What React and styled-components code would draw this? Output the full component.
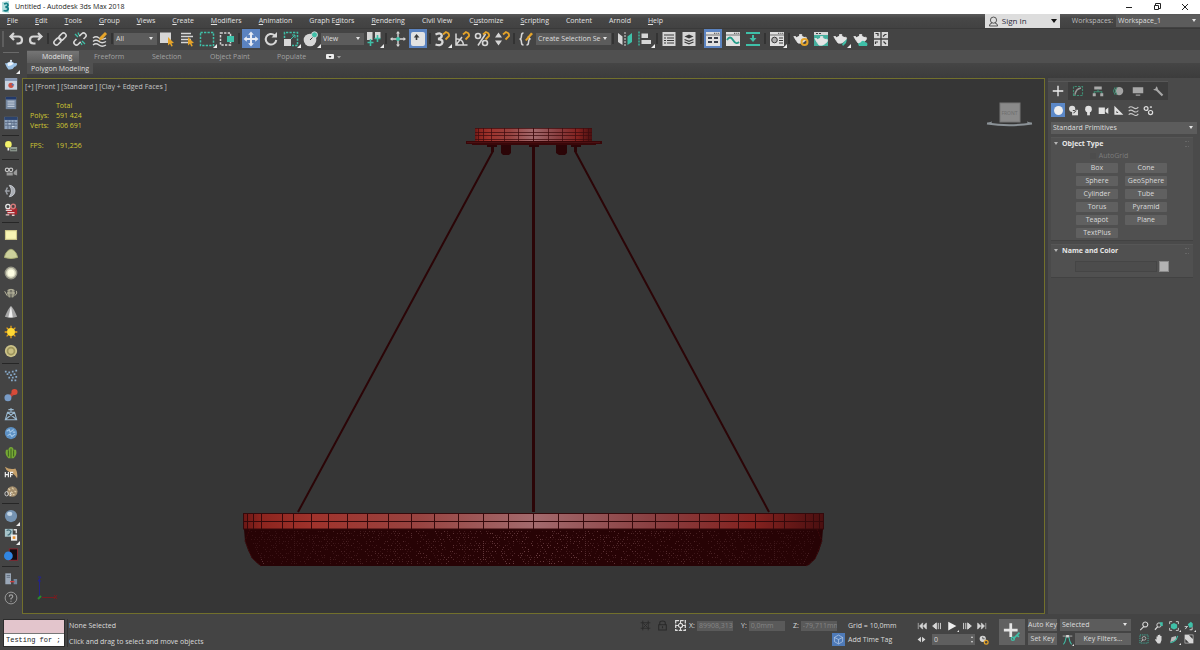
import React, { useState } from "react";
import styled, { createGlobalStyle, css } from "styled-components";

const GlobalStyle = createGlobalStyle`
    * {
        box-sizing: border-box;
    }
    body {
        margin: 0;
        background: #444444;
        color: #dcdcdc;
        font-family: "Open Sans", "Noto Sans", sans-serif;
        font-size: 7px;
        line-height: 10px;
    }
    button, input, select {
        font: inherit;
        color: inherit;
        margin: 0;
        padding: 0;
        border: none;
        border-radius: 0;
        background: none;
    }
`;

const light = "#d6d6d6";
const teal = "#3fc0a8";
const gold = "#e5a42a";

const Page = styled.div`
    display: flex;
    flex-direction: column;
    min-height: 100vh;
`;

/* ---------- title and menus ---------- */

const TitleBar = styled.header`
    display: flex;
    align-items: center;
    height: 14px;
    padding: 0 10px 0 2px;
    gap: 4px;
    background: #ffffff;
    color: #1c1c1c;
`;

const Title = styled.h1`
    flex: 1;
    margin: 0;
    font-size: 7px;
    font-weight: 400;
`;

const WindowButtons = styled.div`
    display: flex;
    gap: 18px;
`;

const WindowButton = styled.button`
    display: flex;
    width: 10px;
    height: 10px;
    color: #222222;
`;

const MenuBar = styled.nav`
    display: flex;
    align-items: center;
    height: 14px;
    padding-left: 7px;
    background: linear-gradient(#5a5a5a, #474747 30%, #424242);
`;

const MenuList = styled.div`
    display: flex;
    flex: 1;
    gap: 17px;
`;

const MenuItem = styled.button`
    white-space: nowrap;
    color: #e2e2e2;
`;

const SignIn = styled.button`
    display: flex;
    align-items: center;
    gap: 3px;
    width: 75px;
    height: 14px;
    padding: 0 3px;
    background: #dddddd;
    color: #2b2b3a;
    font-size: 8px;
`;

const SignInLabel = styled.span`
    flex: 1;
    text-align: left;
`;

const WorkspaceLabel = styled.label`
    margin-left: 12px;
    margin-right: 3px;
    color: #bdbdbd;
`;

/* ---------- shared controls ---------- */

const SelectWrap = styled.div`
    position: relative;
    width: ${(p) => p.$width || "100%"};
    height: 12px;
    flex: none;
    &::after {
        content: "";
        position: absolute;
        right: 4px;
        top: 4px;
        border: 2px solid transparent;
        border-top: 3px solid #e4e4e4;
        pointer-events: none;
    }
`;

const SelectBox = styled.select`
    appearance: none;
    display: block;
    width: 100%;
    height: 12px;
    padding: 0 9px 0 2px;
    background: #5c5c5c;
    color: #dedede;
    line-height: 12px;
`;

function Select({ id, label, value, width }) {
    return (
        <SelectWrap $width={width}>
            <SelectBox id={id} aria-label={label}>
                <option>{value}</option>
            </SelectBox>
        </SelectWrap>
    );
}

function Icon({ size = 16, children }) {
    return (
        <svg width={size} height={size} viewBox="0 0 16 16" fill="none" aria-hidden="true">
            {children}
        </svg>
    );
}

/* ---------- main toolbar ---------- */

const Toolbar = styled.div`
    display: flex;
    align-items: center;
    height: 22px;
    padding-bottom: 2px;
    background: #444444;
    border-top: 1px solid #3a3a3a;
    &::before {
        content: "";
        width: 2px;
        height: 16px;
        margin: 0 2px 0 2px;
        background: #5e5e5e;
    }
`;

const ToolButton = styled.button`
    position: relative;
    display: flex;
    flex: none;
    align-items: center;
    justify-content: center;
    width: 20px;
    height: 19px;
    ${(p) => p.$active && css`
        background: #5b83c0;
        background-clip: content-box;
        padding: 0 1px;
    `}
    ${(p) => p.$flyout && css`
        &::after {
            content: "";
            position: absolute;
            right: 0;
            bottom: 0;
            border: 2px solid #ededed;
            border-top-color: transparent;
            border-left-color: transparent;
        }
    `}
`;

const Divider = styled.span`
    flex: none;
    width: 2px;
    height: 11px;
    margin: 0 1px;
    background: #333333;
`;

const magnet = <path d="M9 3.500 L12 1 Q15.500 2 15 5 L11.500 8.500" stroke={gold} strokeWidth="1.800" />;

const teapot = (
    <path
        d="M3.500 6.500 Q7.500 3.700 11.500 6.500 Q12 9 10.700 11 Q8 13 5 12 Q3 9.500 0.800 5.500 L2.600 5.500 Z M6.500 3.500 H8.800 V5.500 H6.500 Z M11 6.500 Q14.500 5.500 13.200 8.600 Q12.500 10 10.800 10.300"
        fill="#e4e4e4"
        stroke="#e4e4e4"
        strokeWidth="0.800"
    />
);

const windowShape = (
    <>
        <path d="M1 1 H15 V15 H1 Z" fill="#e0e0e0" />
        <path d="M1 4 H15" stroke="#444" strokeWidth="0.700" />
        <path d="M9 2.300 H10.300 M11.300 2.300 H12.300 M13.200 2.300 H14.200" stroke="#444" />
    </>
);

const icons = {
    undo: <path d="M6 2 L2.500 5.500 L6 9 M2.500 5.500 H10.500 Q14 5.500 14 9 Q14 12.500 10.500 12.500 H8.500" stroke={light} strokeWidth="2.200" />,
    redo: <path d="M10 2 L13.500 5.500 L10 9 M13.500 5.500 H5.500 Q2 5.500 2 9 Q2 12.500 5.500 12.500 H7.500" stroke={light} strokeWidth="2.200" />,
    link: (
        <g transform="rotate(-45 8 8)" stroke={light} strokeWidth="1.600">
            <rect x="0.500" y="5.500" width="8" height="5" rx="2.500" />
            <rect x="7.500" y="5.500" width="8" height="5" rx="2.500" />
        </g>
    ),
    unlink: (
        <>
            <g transform="rotate(-45 8 8)" stroke={light} strokeWidth="1.600">
                <path d="M5.500 5.500 H3 Q0.500 5.500 0.500 8 Q0.500 10.500 3 10.500 H6.500" />
                <path d="M9.500 5.500 H13 Q15.500 5.500 15.500 8 Q15.500 10.500 13 10.500 H10.500" />
            </g>
            <path d="M3 3 L6 6 M6 1.500 L7 4 M10 10 L13 13 M9 12 L10 14" stroke={teal} strokeWidth="1.300" />
        </>
    ),
    bind: (
        <>
            <path d="M1 7 Q4 4.500 7 7 T14 7 M1 10.500 Q4 8 7 10.500 T14 10.500 M1 14 Q4 11.500 7 14 T14 14" stroke={light} strokeWidth="1.400" />
            <path d="M7 10 L8 6 L13 1 L15 3 L10.500 8 Z" fill={gold} />
        </>
    ),
    pick: (
        <>
            <path d="M1 1.500 H12 V12 H1 Z" fill={light} />
            <path d="M9 6 L15 12 L12.500 12.200 L13.800 15 L12.300 15.500 L11 12.800 L9 14.500 Z" fill={gold} />
        </>
    ),
    byName: (
        <>
            <path d="M2 2.500 H12 M2 5.500 H14 M2 8.500 H12 M2 11.500 H9" stroke={light} strokeWidth="1.600" />
            <path d="M9 6 L15 12 L12.500 12.200 L13.800 15 L12.300 15.500 L11 12.800 L9 14.500 Z" fill={gold} />
        </>
    ),
    region: <rect x="1.500" y="1.500" width="13" height="13" stroke={teal} strokeWidth="1.500" strokeDasharray="2.300 1.200" />,
    crossing: (
        <>
            <rect x="1.500" y="2" width="10" height="12" stroke={light} strokeWidth="1.500" strokeDasharray="2.300 1.300" />
            <rect x="8" y="5" width="7" height="6" fill={teal} />
        </>
    ),
    move: <path d="M8 0.500 L10.800 3.800 H9 V7 H12.200 V5.200 L15.500 8 L12.200 10.800 V9 H9 V12.200 H10.800 L8 15.500 L5.200 12.200 H7 V9 H3.800 V10.800 L0.500 8 L3.800 5.200 V7 H7 V3.800 H5.200 Z" fill="#e8ecf4" />,
    rotate: (
        <>
            <path d="M11.500 4.200 A5.300 5.300 0 1 0 13.300 9" stroke={light} strokeWidth="2" />
            <path d="M14 1 V6.500 H8.500 Z" fill={light} />
        </>
    ),
    scale: (
        <>
            <path d="M1.500 7 V1.500 H14.500 V14.500 H9" stroke={teal} strokeWidth="1.500" strokeDasharray="2.300 1.200" />
            <rect x="1" y="8" width="7" height="7" fill={light} />
            <path d="M8 8 L12 4 M9 4 H12 V7" stroke={teal} />
        </>
    ),
    place: (
        <>
            <circle cx="7" cy="9" r="6.300" fill={light} />
            <path d="M7 9 L12 4" stroke="#333" />
            <circle cx="11.500" cy="3.800" r="3" fill={teal} stroke={light} />
        </>
    ),
    pivot: (
        <>
            <path d="M1 1 H6.500 V9 H1 Z M9 1 H14.500 V7 H9 Z" fill={light} />
            <path d="M4.500 8 V15 M1.500 11.500 H7.500 M11.500 4 V11 M8.500 7.500 H14.500" stroke={teal} strokeWidth="1.600" />
        </>
    ),
    manipulate: (
        <>
            <path d="M8 1 V15 M1 8 H15" stroke={light} strokeWidth="1.400" />
            <path d="M8 0 L10 2.500 H6 Z M8 16 L10 13.500 H6 Z M0 8 L2.500 6 V10 Z M16 8 L13.500 6 V10 Z" fill={light} />
            <circle cx="8" cy="8" r="2" fill={teal} />
        </>
    ),
    keyboard: (
        <>
            <rect x="1" y="1" width="14" height="14" rx="2" fill="#e2e2e2" />
            <path d="M6.500 3 L9.500 6.500 H7.300 V9 H5.700 V6.500 H3.800 Z" fill="#3c3c3c" />
        </>
    ),
    snap3: (
        <>
            <path d="M1.500 3.500 Q7.500 1 7.800 4.600 Q7.800 7.500 4 8 Q8.800 8.300 8.500 11.500 Q7.500 15.500 1.500 13.500" stroke={light} strokeWidth="2.300" />
            {magnet}
        </>
    ),
    snapAngle: (
        <>
            <path d="M2 2.500 V14 H13.500 M2 8 Q9 7.500 9.500 14 M2 14 L8 6" stroke={light} strokeWidth="1.500" />
            {magnet}
        </>
    ),
    snapPercent: (
        <>
            <circle cx="4" cy="5" r="2.500" stroke={light} strokeWidth="1.600" />
            <circle cx="11" cy="12" r="2.500" stroke={light} strokeWidth="1.600" />
            <path d="M11.500 3 L4 14.500" stroke={light} strokeWidth="1.600" />
            {magnet}
        </>
    ),
    snapSpinner: (
        <>
            <path d="M4.500 1.500 L8 6.500 H1 Z M4.500 14.500 L8 9.500 H1 Z" fill={light} />
            {magnet}
        </>
    ),
    braces: (
        <>
            <path d="M5.500 2 Q3.500 2 3.500 4.500 Q3.500 8 1.500 8 Q3.500 8 3.500 11.500 Q3.500 14 5.500 14 M8.500 14 Q10.500 14 10.500 11.500 Q10.500 8 12.500 8 Q10.500 7.500 10.500 5" stroke={light} strokeWidth="1.500" />
            <path d="M7 9 L13 1.500 L15 3 L8.500 10 Z" fill={gold} />
        </>
    ),
    mirror: (
        <>
            <path d="M1 2 L5.500 5.500 V14 L1 11 Z" fill={light} />
            <path d="M15 2 L10.500 5.500 V14 L15 11 Z" fill={teal} />
            <path d="M8 1 V16" stroke={light} strokeDasharray="2 1" />
        </>
    ),
    align: (
        <>
            <path d="M2 0.500 V15.500" stroke={teal} strokeWidth="1.300" strokeDasharray="2 1" />
            <path d="M4.500 2.500 H11 V7 H4.500 Z M4.500 9 H14 V13 H4.500 Z" fill={light} />
        </>
    ),
    sceneList: (
        <>
            <path d="M1.500 1 H14.500 V15 H1.500 Z" fill={light} />
            <path d="M3 4 H13 M3 7 H5 M6 7 H13 M3 9.500 H5 M6 9.500 H13 M3 12 H5 M6 12 H13" stroke="#3a3a3a" strokeWidth="1.100" />
        </>
    ),
    layers: (
        <>
            <path d="M1.500 1 H14.500 V15 H1.500 Z" fill={light} />
            <path d="M8 3.500 L12.500 5.500 L8 7.500 L3.500 5.500 Z" fill="#3a3a3a" />
            <path d="M3.500 8.500 L8 10.300 L12.500 8.500 M3.500 11 L8 12.800 L12.500 11" stroke="#3a3a3a" strokeWidth="1.300" />
        </>
    ),
    ribbon: (
        <>
            {windowShape}
            <path d="M3 7 H7 M9 7 H13 M3 11 H7 M9 11 H13" stroke="#3a3f49" strokeWidth="1.800" />
        </>
    ),
    curve: (
        <>
            {windowShape}
            <path d="M2 9 Q5 4 8 9 T14 11" stroke="#249b88" strokeWidth="1.800" />
        </>
    ),
    schematic: (
        <>
            <path d="M1 2 H15 M1 14 H15" stroke={teal} strokeWidth="2.200" />
            <path d="M8 4 V8" stroke={teal} strokeWidth="2" />
            <path d="M4.500 7 H11.500 L8 11 Z" fill={teal} />
        </>
    ),
    material: (
        <>
            {windowShape}
            <circle cx="5.500" cy="9" r="2.800" fill="#aaa" stroke="#3a3a3a" />
            <path d="M10 7 H14 M10 9.500 H14 M10 12 H14" stroke="#3a3a3a" />
        </>
    ),
    renderSetup: (
        <>
            {teapot}
            <circle cx="11.500" cy="11" r="3" stroke={gold} strokeWidth="2" />
        </>
    ),
    renderFrame: (
        <>
            <rect x="1" y="1" width="14" height="14" fill="#45b09e" />
            <path d="M1 1 H15 V4 H1 Z" fill={light} />
            <path d="M3 2.500 H5 M6 2.500 H8" stroke="#444" />
            <g transform="translate(1 2)">{teapot}</g>
        </>
    ),
    render: (
        <>
            {teapot}
            <path d="M9 13 L14 8 L13 12 L10 15 Z" fill={teal} />
        </>
    ),
    cloud: (
        <>
            {teapot}
            <path d="M6 15 Q4 12 7.500 11.500 Q9.500 8.500 12 11 Q15.500 11.500 14 15 Z" fill={teal} />
        </>
    ),
    gallery: (
        <>
            <path d="M1 1 H7.300 V7.300 H1 Z M8.700 1 H15 V7.300 H8.700 Z M1 8.700 H7.300 V15 H1 Z M8.700 8.700 H15 V15 H8.700 Z" fill={light} />
            <path d="M2.500 2.500 H5 V5 M10 5.500 L12 3.500 H13.500 M2.500 13 V11 H5 M10.500 10.500 L13 13" stroke="#3c3c3c" strokeWidth="1.200" />
        </>
    ),
};

const toolGroups = [
    [["Undo", "undo"], ["Redo", "redo"]],
    [["Link", "link"], ["Unlink", "unlink"], ["Bind to space warp", "bind"]],
    [
        { select: "Selection filter", value: "All", width: "43px" },
        ["Select object", "pick"], ["Select by name", "byName"],
        ["Rectangular region", "region", "fly"], ["Window crossing", "crossing"],
    ],
    [
        ["Move", "move", "on"], ["Rotate", "rotate"], ["Scale", "scale", "fly"], ["Place", "place", "fly"],
        { select: "Reference coordinates", value: "View", width: "43px" },
        ["Pivot center", "pivot", "fly"],
    ],
    [["Manipulate", "manipulate"], ["Keyboard override", "keyboard", "on"]],
    [["Snaps", "snap3", "fly"], ["Angle snap", "snapAngle"], ["Percent snap", "snapPercent"], ["Spinner snap", "snapSpinner"]],
    [
        ["Edit selection sets", "braces"],
        { select: "Named selection sets", value: "Create Selection Se", width: "75px" },
    ],
    [["Mirror", "mirror"], ["Align", "align", "fly"]],
    [["Scene explorer", "sceneList"], ["Layer explorer", "layers"]],
    [["Toggle ribbon", "ribbon", "on"], ["Curve editor", "curve"], ["Schematic view", "schematic"]],
    [["Material editor", "material", "fly"]],
    [
        ["Render setup", "renderSetup"], ["Rendered frame", "renderFrame"], ["Render", "render", "fly"],
        ["Render in cloud", "cloud"], ["Gallery", "gallery"],
    ],
];

function MainToolbar() {
    return (
        <Toolbar>
            {toolGroups.map((group, g) => (
                <React.Fragment key={g}>
                    {g > 0 && <Divider />}
                    {group.map((tool) =>
                        tool.select ? (
                            <Select key={tool.select} label={tool.select} value={tool.value} width={tool.width} />
                        ) : (
                            <ToolButton
                                key={tool[0]}
                                aria-label={tool[0]}
                                $active={tool[2] === "on"}
                                $flyout={tool[2] === "fly"}
                            >
                                <Icon>{icons[tool[1]]}</Icon>
                            </ToolButton>
                        )
                    )}
                </React.Fragment>
            ))}
        </Toolbar>
    );
}

/* ---------- left toolbar ---------- */

const Body = styled.div`
    display: flex;
    flex: 1;
`;

const SideBar = styled.aside`
    display: flex;
    flex-direction: column;
    width: 22px;
    padding: 2px 2px 6px 1px;
    background: #444444;
    &::before {
        content: "";
        height: 1px;
        margin: 0 1px 2px 2px;
        background: #6a6a6a;
    }
`;

const SideButton = styled(ToolButton)`
    flex: 1;
    width: auto;
    height: auto;
    min-height: 14px;
`;

const SideDivider = styled.span`
    height: 1px;
    margin: 2px 1px;
    background: #262626;
`;

const sideGroups = [
    [
        <>
            <path d="M3 6 Q8 2 12 6 Q15 5 15 7 Q14 10 12 10 Q10 14 5 13 Q3 11 1 6 Z" fill="#9ec3e6" />
            <path d="M4 6 Q8 3.500 11 6.500 Q8 9 4.500 9 Z" fill="#eef5fb" />
            <circle cx="8" cy="3.300" r="1.200" fill="#dde9f4" />
        </>,
        <>
            <rect x="1" y="1.500" width="14" height="13" fill="#c9d3e2" />
            <path d="M1 1.500 H15 V4.500 H1 Z" fill="#8497b5" />
            <circle cx="8" cy="9.500" r="3" fill="#cb5145" />
            <path d="M9 7 L12 9 L9 10 Z" fill="#4a78ba" />
        </>,
        <>
            <rect x="2" y="1" width="12" height="14" fill="#7688a0" />
            <path d="M2 1 H14 V4 H2 Z" fill="#22396a" />
            <path d="M4 6 H12 M4 8 H12 M4 10 H12 M4 12 H12" stroke="#c6cfdb" />
        </>,
        <>
            <rect x="0.500" y="1" width="15" height="14" fill="#8fa2ba" />
            <path d="M0.500 1 H15.500 V4.500 H0.500 Z" fill="#2b436e" />
            <path d="M1 7.500 H15 M1 10.500 H15 M4.500 5 V15 M8 5 V15 M11.500 5 V15" stroke="#5a6c86" />
            <path d="M5 9 H8 M9 12 H12" stroke="#dfe8f0" />
        </>,
    ],
    [
        <>
            <circle cx="5" cy="5" r="3.800" fill="#f3f26a" />
            <path d="M4 9 H6 V12 H4 Z" fill="#e8e8e8" />
            <path d="M7 8 H15 V13 H7 Z" fill="#8f9a90" />
            <path d="M8 11 H14" stroke="#4e5850" />
        </>,
    ],
    [
        <>
            <circle cx="3.500" cy="5.500" r="2" stroke="#c4c4c4" strokeWidth="1.300" />
            <circle cx="8" cy="5.500" r="2" stroke="#c4c4c4" strokeWidth="1.300" />
            <path d="M3 8.500 H10 V12 H3 Z M11 8 L15 4.500 V12 L11 10.500 Z" fill="#9a9a9a" />
        </>,
        <>
            <path d="M6 1.500 A6.500 6.500 0 0 1 6 14.500 Q11 8 6 1.500 Z" fill="#a9adb3" stroke="#c8ccd2" />
            <path d="M4 4 Q1 8 4 12 M6.500 8 H1" stroke="#9b9fa6" strokeWidth="1.600" />
        </>,
        <>
            <path d="M3 6 H15 V13 H4 Z" fill="#a8242c" />
            <circle cx="4.500" cy="4" r="2.500" stroke="#e6e6e6" strokeWidth="1.500" />
            <circle cx="10.500" cy="4" r="2.500" stroke="#d67a7a" strokeWidth="1.700" />
            <path d="M2 8.500 H9 M4 11 H12 M2 13.500 H6 M9 14 H12" stroke="#e4cccc" strokeWidth="1.500" />
        </>,
    ],
    [
        <rect x="1.700" y="3" width="12.600" height="10" fill="#f8f5b4" stroke="#cfc98b" strokeWidth="1.300" />,
        <path d="M0.500 12 Q2 4 8 2.500 Q14 4 15.500 12 Q8 14.500 0.500 12 Z" fill="#ccd09c" stroke="#abb076" />,
        <>
            <circle cx="8" cy="8" r="6.500" fill="#d8d8c0" stroke="#969686" strokeWidth="1.600" />
            <circle cx="8" cy="8" r="4" fill="#fdfde2" />
        </>,
        <>
            <ellipse cx="8" cy="8.500" rx="4.800" ry="4.500" fill="#77766a" />
            <path d="M4 5 Q8 2.500 12 5 M6 4 Q5 8 6 13 M10 4 Q11 8 10 13 M3.500 8 H12.500 M3.500 11 L0.800 6 M12.500 11 Q16 8 14 5.500" stroke="#c2c0a6" />
        </>,
        <>
            <path d="M8 1 Q11.500 4 15 13.500 Q8 16 1 13.500 Q4.500 4 8 1 Z" fill="#a6a6a6" />
            <path d="M8 1 L10 14 H5 Z" fill="#efefef" />
        </>,
        <>
            <path d="M8 0.800 V15.200 M0.800 8 H15.200 M3 3 L13 13 M13 3 L3 13" stroke="#eca518" strokeWidth="1.500" />
            <circle cx="8" cy="8" r="4.500" fill="#ffd934" />
        </>,
        <>
            <circle cx="8" cy="8" r="7" fill="#cdc389" />
            <circle cx="8" cy="8" r="5" fill="#9c945c" />
            <circle cx="8" cy="8" r="3" fill="#c9be82" />
        </>,
    ],
    [
        <path d="M1 4 H3 M5 5 H7 M9 4 H11 M13 3 H15 M3 7 H5 M7 8 H9 M11 7 H13 M5 11 H7 M9 11 H11 M13 10 H15 M8 14 H10 M12 14 H14" stroke="#87a9c9" strokeWidth="2" />,
        <>
            <path d="M5 11 L12 5" stroke="#bd4437" strokeWidth="3.500" />
            <circle cx="12" cy="4.500" r="3.500" fill="#d84b39" />
            <circle cx="4.500" cy="11" r="4" fill="#789bc6" />
        </>,
        <path d="M1.500 14.500 L4 6 H12 L14.500 14.500 Z M4 6 L14 14 M12 6 L2 14 M5 3 H11 M8 1 V6" stroke="#9ab8cf" strokeWidth="1.200" />,
        <>
            <circle cx="8" cy="8" r="7" fill="#5d91c4" />
            <path d="M3 6 L6 4 L7 7 L11 4 M4 11 L7 9 L9 12 L13 9 M10 7 L13 7" stroke="#a5c8e6" strokeWidth="1.200" />
        </>,
        <>
            <path d="M5 14 Q1 10 2 5 Q3.500 3 5 5 Q5 1 8 1 Q11 1 11 5 Q12.500 3 14 5 Q15 10 11 14 Z" fill="#75a834" />
            <path d="M5 5 V12 M8 3 V14 M11 5 V12" stroke="#36551e" />
        </>,
        <>
            <path d="M1 2 Q7 6 13 4 Q16 9 15 15 Q11 9 6 8 Q2 6 1 2 Z" fill="#c6a06a" />
            <path d="M1.500 8 V14 M5 8 V14 M1.500 11 H5 M7.500 14 V8.500 H10.500 M7.500 11 H10" stroke="#f1f1f1" strokeWidth="1.300" />
        </>,
        <>
            <circle cx="9.500" cy="7.500" r="6" fill="#a38d6c" />
            <path d="M5 4 L7 6 M9 3 L11 5 M8 8 L10 9 M12 7 L14 8 M10 11 H12" stroke="#ddcba6" strokeWidth="1.400" />
            <ellipse cx="3" cy="10" rx="2" ry="2.500" stroke="#d9d9d9" />
            <path d="M8.500 8 Q6 9 8 10.500 Q9 12 6.500 12.500" stroke="#ededed" />
        </>,
    ],
    [
        <>
            <circle cx="8" cy="8" r="7" fill="#7593b2" />
            <ellipse cx="6.500" cy="5.500" rx="3" ry="2.500" fill="#c4d6e6" />
        </>,
        <>
            <path d="M1 1 H10 V10 H1 Z" fill="#a7c4ca" />
            <path d="M3 3 Q6 1 8 4 Q7 8 4 8" stroke="#426b78" strokeWidth="1.300" />
            <rect x="8" y="7.500" width="7" height="7" fill="#ececec" />
            <rect x="10" y="9.500" width="3" height="3" fill="#e89132" />
            <path d="M11 2 H14 V6" stroke="#e7e7e7" strokeWidth="1.500" />
        </>,
        <>
            <rect x="6" y="1" width="9.500" height="13" fill="#130c10" stroke="#8e2730" />
            <circle cx="5" cy="9" r="5" fill="#3186e2" />
        </>,
    ],
    [
        <>
            <path d="M1.500 1.500 H8 V14 H1.500 Z" fill="#9ba8b8" />
            <path d="M3 4 H7 M3 6 H7" stroke="#5f6c7b" />
            <path d="M11 8 H15 V14 H11 Z" fill="#73869c" />
            <path d="M7 11 H12" stroke="#cb3f3f" strokeWidth="1.500" />
        </>,
        <>
            <circle cx="8" cy="8" r="6.700" stroke="#a3a3a3" />
            <path d="M6 6.500 Q6 4.500 8 4.500 Q10 4.500 10 6.300 Q10 7.500 8 8.500 V9.800 M8 11 V12.200" stroke="#a3a3a3" strokeWidth="1.300" />
        </>,
    ],
];

const sideFlyouts = ["0-0", "5-0", "5-1"];

function LeftToolbar() {
    return (
        <SideBar>
            {sideGroups.map((group, g) => (
                <React.Fragment key={g}>
                    {g > 0 && <SideDivider />}
                    {group.map((shape, i) => (
                        <SideButton key={i} aria-label={`Tool ${g + 1}.${i + 1}`} $flyout={sideFlyouts.includes(`${g}-${i}`)}>
                            <Icon size={14}>{shape}</Icon>
                        </SideButton>
                    ))}
                </React.Fragment>
            ))}
        </SideBar>
    );
}

/* ---------- ribbon ---------- */

const Main = styled.main`
    display: flex;
    flex: 1;
    flex-direction: column;
    min-width: 0;
`;

const Ribbon = styled.div`
    margin-left: 5px;
    background: #414141;
`;

const RibbonTabs = styled.div`
    display: flex;
    align-items: center;
    height: 13px;
    background: #505050;
`;

const RibbonTab = styled.button`
    height: 12px;
    width: ${(p) => p.$width};
    padding-left: 15px;
    text-align: left;
    white-space: nowrap;
    color: ${(p) => (p.$active ? "#e2e2e2" : "#a2a2a2")};
    background: ${(p) => (p.$active ? "linear-gradient(#757575, #5c5c5c)" : "none")};
`;

const RibbonToggle = styled.button`
    display: flex;
    align-items: center;
    gap: 3px;
    height: 12px;
`;

const RibbonPanel = styled.div`
    height: 15px;
    background: linear-gradient(#454545, #3c3c3c);
`;

const PanelName = styled.button`
    height: 11px;
    padding: 0 4px;
    background: #505050;
    color: #dedede;
`;

const tabs = [["Modeling", "52px"], ["Freeform", "58px"], ["Selection", "58px"], ["Object Paint", "67px"], ["Populate", "64px"]];

function RibbonBar() {
    const [tab, setTab] = useState("Modeling");
    return (
        <Ribbon>
            <RibbonTabs>
                {tabs.map(([name, width]) => (
                    <RibbonTab key={name} $width={width} $active={name === tab} onClick={() => setTab(name)}>
                        {name}
                    </RibbonTab>
                ))}
                <RibbonToggle aria-label="Minimize ribbon">
                    <svg width="16" height="6" viewBox="0 0 16 6" aria-hidden="true">
                        <rect width="8" height="5" rx="1" fill="#ededed" />
                        <path d="M2.500 2 H5.500 L4 4 Z" fill="#333" />
                        <path d="M11 2 H15 L13 4.500 Z" fill="#a0a0a0" />
                    </svg>
                </RibbonToggle>
            </RibbonTabs>
            <RibbonPanel>
                <PanelName>Polygon Modeling</PanelName>
            </RibbonPanel>
        </Ribbon>
    );
}

/* ---------- viewport ---------- */

const Workspace = styled.div`
    display: flex;
    flex: 1;
`;

const Viewport = styled.section`
    position: relative;
    flex: 1;
    border: 1px solid #72702c;
    background: #363636;
`;

const Scene = styled.svg`
    position: absolute;
    inset: 0;
    width: 100%;
    height: 100%;
`;

const ViewLabel = styled.div`
    position: absolute;
    top: 3px;
    left: 2px;
    color: #c6c6c6;
`;

const Stats = styled.table`
    position: absolute;
    top: 22px;
    left: 7px;
    border-collapse: collapse;
    color: #d2c832;
    td, th {
        height: 10px;
        padding: 0;
        font-weight: 400;
        text-align: left;
        white-space: nowrap;
    }
    th {
        width: 26px;
    }
`;

const centre = 533;
const ringOffsets = [0, 25, 50, 75, 99, 122, 145, 166, 186, 205, 222, 240, 251, 272, 280, 286];
const rimOffsets = [0, 15, 29, 42, 50, 55];

const both = (offsets) => offsets.flatMap((d) => [centre - d, centre + d]);

// crystals hanging below the ring, brighter towards the middle
const crystals = [];
for (let row = 0; row < 17; row++) {
    for (let i = 0; i < 188; i++) {
        const seed = (i * i * 31 + i * 73 + row * 151 + i * row * 17) % 97;
        if (seed < 50) {
            const x = 251 + i * 3 + (row % 2) + (seed % 2);
            crystals.push({
                x: Math.min(Math.max(x, 247 + row), 819 - row),
                y: 531 + row * 2,
                o: 0.12 + (1 - Math.abs(x - centre) / 290) * 0.4 * ((seed % 5) / 4),
            });
        }
    }
}

function Chandelier() {
    return (
        <Scene viewBox="23 79 1021 534" role="img" aria-label="Front view of a chandelier">
            <defs>
                <linearGradient id="ring">
                    <stop offset="0" stopColor="#6a1715" />
                    <stop offset="0.03" stopColor="#8c241e" />
                    <stop offset="0.12" stopColor="#a0332c" />
                    <stop offset="0.3" stopColor="#984340" />
                    <stop offset="0.5" stopColor="#a36a6d" />
                    <stop offset="0.7" stopColor="#8a4042" />
                    <stop offset="0.88" stopColor="#84221f" />
                    <stop offset="1" stopColor="#4a0f10" />
                </linearGradient>
            </defs>
            <g stroke="#2b0507" strokeWidth="2">
                <path d="M493 151 L298 512 M575 151 L769 512" />
                <path d="M533.500 146 V512" strokeWidth="3" />
            </g>
            <rect x="475" y="128" width="117" height="14" fill="url(#ring)" />
            <path d="M475 128.500 H592 M475 132.500 H592 M475 135.500 H592 M475 139.500 H592" stroke="#3f0c0e" opacity="0.75" />
            {both(rimOffsets).map((x, i) => (
                <path key={i} d={`M${x}.5 128 V142`} stroke="#3f0c0e" opacity="0.75" />
            ))}
            <path d="M466 141 H602 V144 H596 V145 H472 V144 H466 Z" fill="#390709" />
            <path d="M467 142.500 H600" stroke="#4c1012" />
            <path d="M487 145 H497 V147 H494 V152 H491 V147 H487 Z M501 145 H511 V153 L509 155 H503 L501 153 Z M529 145 H539 V147 H529 Z M556 145 H567 V153 L565 155 H559 L556 153 Z M571 145 H581 V147 H577 V152 H574 V147 H571 Z" fill="#2b0507" />
            <path d="M244 529 H823 L822 541 L819 551 L815 559 L809 565 L806 566 H261 L257 563 L252 558 L248 550 L245 541 Z" fill="#270305" />
            {crystals.map((c, i) => (
                <rect key={i} x={c.x} y={c.y} width="1" height="1" fill="#ab777c" opacity={c.o} />
            ))}
            <path d="M250 529 L245 541 L252 558 L261 566 M817 529 L822 541 L815 559 L806 566" stroke="#3c0a0c" fill="none" strokeDasharray="2 1" />
            <rect x="243" y="513" width="581" height="16" fill="url(#ring)" />
            <path d="M243 513.500 H824 M243 521.500 H824 M243 529 H824" stroke="#35090b" />
            <path d="M243.500 513 V529 M823.500 513 V529" stroke="#35090b" />
            {both(ringOffsets).map((x, i) => (
                <path key={i} d={`M${x}.5 513 V529`} stroke="#35090b" />
            ))}
            <path d="M987 123.500 Q1009 127 1032 123.500" fill="none" stroke="#8b9297" strokeWidth="2" />
            <path d="M987 123.500 L992 122 M1032 123.500 L1027 122" stroke="#8b9297" />
            <rect x="1000" y="103" width="20" height="19" fill="#8a8a8a" stroke="#777" />
            <text x="1009.500" y="115" textAnchor="middle" fontSize="5" fill="#6c6c6c">FRONT</text>
            <path d="M39.500 579 V597" stroke="#252585" />
            <path d="M42 597.500 H56" stroke="#791c20" />
            <path d="M38 599 L41 596" stroke="#2c8c2d" strokeWidth="2" />
            <path d="M38 577 H41 L38 581 H41" stroke="#252585" fill="none" />
            <path d="M54 595 L57 599 M57 595 L54 599" stroke="#791c20" />
        </Scene>
    );
}

/* ---------- command panel ---------- */

const CommandPanel = styled.aside`
    width: 155px;
    padding: 1px 3px 0 3px;
    background: #4a4a4a;
    border-left: 3px solid #3f3f3f;
`;

const PanelTabs = styled.div`
    display: flex;
    width: 120px;
    margin-left: -3px;
    margin-top: 2px;
    border-top: 1px solid #575757;
    background: #3d3d3d;
`;

const PanelTab = styled.button`
    display: flex;
    flex: 1;
    align-items: center;
    justify-content: center;
    height: 18px;
    background: ${(p) => (p.$active ? "#4a4a4a" : "none")};
`;

const Categories = styled.div`
    display: flex;
    gap: 1px;
    margin: 3px 0 5px;
`;

const Category = styled.button`
    display: flex;
    align-items: center;
    justify-content: center;
    width: 14px;
    height: 14px;
    background: ${(p) => (p.$active ? "#5b88c8" : "none")};
`;

const Rollout = styled.section`
    width: 142px;
    margin-top: 3px;
    padding-bottom: 2px;
    background: #505050;
    border-top: 1px solid #565656;
    border-bottom: 1px solid #424242;
`;

const RolloutTitle = styled.button`
    display: flex;
    align-items: center;
    gap: 4px;
    width: 100%;
    height: 11px;
    padding: 0 4px 0 3px;
    font-weight: 700;
    color: #e6e6e6;
    &::before {
        content: "";
        border: 2px solid transparent;
        border-top: 3px solid #b4b4b4;
        border-bottom: 0;
    }
    &::after {
        content: "";
        width: 4px;
        height: 4px;
        margin-left: auto;
        border: 1px dotted #666666;
        border-width: 1px 0;
    }
`;

const AutoGrid = styled.label`
    display: flex;
    align-items: center;
    justify-content: center;
    gap: 3px;
    height: 14px;
    margin-right: 26px;
    color: #7c7c7c;
    input {
        appearance: none;
        width: 6px;
        height: 6px;
        background: #4d4d4d;
    }
`;

const ObjectGrid = styled.div`
    display: grid;
    grid-template-columns: 42px 42px;
    gap: 3px 7px;
    margin-left: 25px;
`;

const ObjectButton = styled.button`
    height: 10px;
    line-height: 10px;
    background: #606060;
    border-radius: 1px;
    color: #dadada;
`;

const NameRow = styled.div`
    display: flex;
    align-items: center;
    gap: 2px;
    height: 18px;
    margin: 1px 0 0 24px;
`;

const NameInput = styled.input`
    width: 82px;
    height: 11px;
    border: 1px solid #454545;
    background: #4c4c4c;
`;

const Swatch = styled.button`
    width: 10px;
    height: 11px;
    background: #b2b2b2;
    border: 1px solid #8a8a8a;
`;

const panelTabs = [
    ["Create", <path d="M8 1 V15 M1 8 H15" stroke="#eee" strokeWidth="1.800" />],
    ["Modify", <><path d="M2 14 V2 H14 V14 Z" stroke="#3e8d73" strokeWidth="1.500" strokeDasharray="3 1.500" /><path d="M4 13 Q5 5 12 4" stroke="#989898" strokeWidth="2" /></>],
    ["Hierarchy", <><path d="M3 2 H13 V6 H3 Z" fill="#aaa" /><path d="M8 6 V9 M3 14 V9 H13 V14" stroke="#3e8d73" strokeWidth="1.500" /><path d="M1 11 H5 V15 H1 Z M11 11 H15 V15 H11 Z" fill="#aaa" /></>],
    ["Motion", <><circle cx="9.500" cy="8" r="5.500" fill="#a3a3a3" /><path d="M4 3 Q0 8 4 13 M6.500 3 Q2.500 8 6.500 13" stroke="#3e8d73" strokeWidth="1.300" /></>],
    ["Display", <><path d="M1 3 H15 V11 H1 Z" fill="#a8a8a8" /><path d="M5 13.500 H11" stroke="#a8a8a8" strokeWidth="1.500" /></>],
    ["Utilities", <><path d="M6 6 L14 14" stroke="#a8a8a8" strokeWidth="2.800" /><path d="M6 1.500 Q8.500 3.500 7.500 6.500 Q4.500 8.500 1.500 6 L4.500 5 L5 3.500 Z" fill="#a8a8a8" /></>],
];

const categories = [
    ["Geometry", <circle cx="8" cy="8" r="6.500" fill="#efefef" />],
    ["Shapes", <><circle cx="6" cy="5.500" r="4.500" fill="#ddd" /><path d="M6 7 H14.500 V15 H6 Z" fill="#ddd" /><path d="M7 8 H10 M8 12 L12 8" stroke="#444" strokeWidth="1.500" /></>],
    ["Lights", <><circle cx="8" cy="6" r="4.800" fill="#e2e2e2" /><path d="M6 10 H10 V15 H6 Z" fill="#e2e2e2" /></>],
    ["Cameras", <path d="M1 3.500 H10 V13 H1 Z M11 7 L15 3.500 V13 L11 10 Z" fill="#e2e2e2" />],
    ["Helpers", <path d="M2 1 L15 14 H2 Z M5 8.500 V11.500 H8 Z" fill="#e2e2e2" fillRule="evenodd" />],
    ["Space warps", <path d="M1 4 Q4 1 8 4 T15 3 M1 9 Q4 6 8 9 T15 8 M1 14 Q4 11 8 14 T15 13" stroke="#c8c8c8" strokeWidth="1.600" />],
    ["Systems", <><circle cx="4.500" cy="5" r="2.800" stroke="#ddd" strokeWidth="1.800" /><circle cx="11" cy="11" r="3" stroke="#ddd" strokeWidth="1.800" /><path d="M10 3 H13" stroke="#ddd" strokeWidth="2" /></>],
];

const objectTypes = [
    "Box", "Cone", "Sphere", "GeoSphere", "Cylinder", "Tube",
    "Torus", "Pyramid", "Teapot", "Plane", "TextPlus",
];

function CreatePanel() {
    return (
        <CommandPanel>
            <PanelTabs>
                {panelTabs.map(([name, shape], i) => (
                    <PanelTab key={name} aria-label={name} $active={i === 0}>
                        <Icon size={12}>{shape}</Icon>
                    </PanelTab>
                ))}
            </PanelTabs>
            <Categories>
                {categories.map(([name, shape], i) => (
                    <Category key={name} aria-label={name} $active={i === 0}>
                        <Icon size={11}>{shape}</Icon>
                    </Category>
                ))}
            </Categories>
            <Select label="Object category" value="Standard Primitives" />
            <Rollout>
                <RolloutTitle>Object Type</RolloutTitle>
                <AutoGrid>
                    <input type="checkbox" disabled />
                    AutoGrid
                </AutoGrid>
                <ObjectGrid>
                    {objectTypes.map((name) => (
                        <ObjectButton key={name}>{name}</ObjectButton>
                    ))}
                </ObjectGrid>
            </Rollout>
            <Rollout>
                <RolloutTitle>Name and Color</RolloutTitle>
                <NameRow>
                    <NameInput aria-label="Object name" />
                    <Swatch aria-label="Object color" />
                </NameRow>
            </Rollout>
        </CommandPanel>
    );
}

/* ---------- status bar ---------- */

const StatusBar = styled.footer`
    display: flex;
    height: 36px;
    padding: 5px 4px 3px 3px;
    background: #444444;
`;

const Listener = styled.div`
    display: flex;
    flex-direction: column;
    width: 62px;
    border: 1px solid #2c2c2c;
    input {
        flex: 1;
        min-height: 0;
        width: 100%;
        padding: 0 2px;
        background: #ffffff;
        color: #222222;
        font-family: "Liberation Mono", monospace;
        font-size: 7px;
    }
    input:first-child {
        background: #e3c5cc;
        border-bottom: 1px solid #777777;
    }
`;

const Messages = styled.div`
    display: flex;
    flex: 1;
    flex-direction: column;
    justify-content: space-between;
    min-width: 0;
    margin-left: 2px;
    padding: 2px 0 0 1px;
    border-left: 1px solid #333333;
    white-space: nowrap;
    p {
        margin: 0;
    }
`;

const Coordinates = styled.div`
    width: 277px;
`;

const StatusRow = styled.div`
    display: flex;
    align-items: center;
    height: 13px;
    gap: ${(p) => p.$gap || "0"};
    justify-content: ${(p) => (p.$end ? "flex-end" : "flex-start")};
    & + & {
        margin-top: 1px;
    }
`;

const Coord = styled.label`
    display: flex;
    align-items: center;
    gap: 2px;
    width: 52px;
    input {
        width: 36px;
        height: 10px;
        padding-left: 2px;
        background: #5a5a5a;
        color: #858585;
    }
`;

const SmallButton = styled.button`
    display: flex;
    flex: none;
    align-items: center;
    justify-content: center;
    position: relative;
    width: ${(p) => p.$width || "15px"};
    height: 13px;
    background: ${(p) => (p.$active ? "#4e7ab8" : "none")};
    ${(p) => p.$flyout && css`
        &::after {
            content: "";
            position: absolute;
            right: 0;
            bottom: 0;
            border: 1px solid #e4e4e4;
            border-top-color: transparent;
            border-left-color: transparent;
        }
    `}
`;

const GridText = styled.span`
    flex: none;
    padding-left: 3px;
    white-space: nowrap;
`;

const TagButton = styled.button`
    width: 69px;
    padding-left: 3px;
    text-align: left;
    white-space: nowrap;
`;

const Playback = styled.div`
    width: 80px;
`;

const FrameInput = styled.input`
    width: 43px;
    height: 11px;
    padding-left: 2px;
    background: #5f5f5f;
    color: #dcdcdc;
    appearance: textfield;
`;

const FrameField = styled.span`
    position: relative;
    display: flex;
    &::before, &::after {
        content: "";
        position: absolute;
        right: 2px;
        border: 1px solid transparent;
    }
    &::before {
        top: 1px;
        border-bottom: 2px solid #dddddd;
    }
    &::after {
        bottom: 1px;
        border-top: 2px solid #dddddd;
    }
`;

const KeyPanel = styled.div`
    display: grid;
    grid-template-columns: 26px 29px 71px;
    gap: 3px;
    margin: 0 6px 0 5px;
`;

const KeyButton = styled.button`
    display: flex;
    align-items: center;
    justify-content: center;
    height: ${(p) => (p.$big ? "26px" : "12px")};
    width: ${(p) => p.$width || "100%"};
    background: #616161;
    white-space: nowrap;
`;

const KeyStack = styled.div`
    display: flex;
    flex-direction: column;
    gap: 2px;
`;

const KeyFilterRow = styled.div`
    display: flex;
    gap: 1px;
`;

const NavGrid = styled.div`
    display: grid;
    grid-template-columns: repeat(4, 14px);
    gap: 0 1px;
    align-content: start;
`;

const playIcons = [
    ["Go to start", <path d="M2 3 V13 M9 3 V13 L4 8 Z M15 3 V13 L10 8 Z" stroke={light} fill={light} />],
    ["Previous frame", <path d="M7 3 V13 L1 8 Z M10 3 V13 M13.500 3 V13" stroke={light} strokeWidth="1.500" fill={light} />],
    ["Play", <path d="M2 1 L15 8 L2 15 Z" fill="#eee" />],
    ["Next frame", <path d="M9 3 V13 L15 8 Z M2.500 3 V13 M6 3 V13" stroke={light} strokeWidth="1.500" fill={light} />],
    ["Go to end", <path d="M14 3 V13 M7 3 V13 L12 8 Z M1 3 V13 L6 8 Z" stroke={light} fill={light} />],
];

const hand = <path d="M4 8 V4 H6 V1.500 H8 V1 H10 V3 H12 V10 L10 15 H6 L1.500 9 L3 8 L4 9 Z" fill={light} />;

const navIcons = [
    ["Zoom", <path d="M7.500 9 L2 14.500 M10 1.500 A4 4 0 1 0 10.100 1.500 Z" stroke={light} strokeWidth="1.800" />],
    ["Zoom all", <><path d="M6 9 L1.500 14" stroke={light} strokeWidth="2" /><circle cx="8" cy="6.500" r="3.500" stroke={light} strokeWidth="1.500" /><path d="M9 2 H14 V8 H11 Z" fill={teal} /></>],
    ["Zoom extents", <><path d="M1 5 V1 H5 M11 1 H15 V5 M15 11 V15 H11 M5 15 H1 V11" stroke={light} strokeWidth="1.400" /><path d="M8 3 L13 5.500 V11 L8 13.500 L3 11 V5.500 Z" fill={teal} /></>, true],
    ["Zoom extents all", <><path d="M2 13 L6 8 M1 9 H5 M13 10 V14 H9" stroke={light} strokeWidth="1.500" /><path d="M6 5 L11 1 L14 4 V9 L9 11 Z" fill={teal} /></>, true],
    ["Zoom region", <><rect x="1.500" y="1.500" width="13" height="13" stroke={teal} strokeWidth="1.300" strokeDasharray="2 1.500" /><circle cx="8" cy="7" r="3" stroke={light} /><path d="M6 9 L4 12" stroke={light} strokeWidth="1.500" /></>],
    ["Pan", hand],
    ["Orbit", <><path d="M2 13 L4 5 L11 3 L12 9 Z" fill="#bbb" /><path d="M2 14 Q11 13 14 3" stroke={teal} strokeWidth="1.800" /></>, true],
    ["Maximize viewport", <><rect x="1" y="1" width="14" height="14" fill={light} /><path d="M8 2 H14 V8 Z M2 8 L8 14 H2 Z" fill="#3a3a3a" /></>],
];

function Status() {
    return (
        <StatusBar>
            <Listener>
                <input aria-label="Macro recorder" />
                <input aria-label="Listener" defaultValue="Testing for ;" />
            </Listener>
            <Messages>
                <p>None Selected</p>
                <p>Click and drag to select and move objects</p>
            </Messages>
            <Coordinates>
                <StatusRow>
                    <SmallButton aria-label="Isolate selection" $width="17px">
                        <Icon size={11}><path d="M1 4 H15 M1 12 H15 M4 1 V15 M12 1 V15 M5 5 L11 11 M11 5 L5 11" stroke="#292929" strokeWidth="1.200" /></Icon>
                    </SmallButton>
                    <SmallButton aria-label="Lock selection" $width="17px">
                        <Icon size={11}><path d="M4 7 V4 Q4 1.500 8 1.500 Q12 1.500 12 4 V7 M2.500 7 H13.500 V14.500 H2.500 Z M8 9 V12" stroke="#292929" strokeWidth="1.500" /></Icon>
                    </SmallButton>
                    <SmallButton aria-label="Absolute mode" $width="18px">
                        <Icon size={11}>
                            <rect x="1" y="1" width="14" height="14" stroke="#ddd" strokeWidth="1.800" strokeDasharray="5 1.500" />
                            <circle cx="8" cy="8" r="3" stroke="#ddd" strokeWidth="1.700" />
                            <path d="M8 1 V5 M8 11 V15 M1 8 H5 M11 8 H15" stroke="#ddd" strokeWidth="1.500" />
                        </Icon>
                    </SmallButton>
                    <Coord>X:<input defaultValue="89908,313" /></Coord>
                    <Coord>Y:<input defaultValue="0,0mm" /></Coord>
                    <Coord>Z:<input defaultValue="-79,711mm" /></Coord>
                    <GridText>Grid = 10,0mm</GridText>
                </StatusRow>
                <StatusRow $end>
                    <SmallButton aria-label="Time tag" $active $width="13px">
                        <Icon size={11}><path d="M8 1.500 L14 5 V11 L8 14.500 L2 11 V5 Z M2 5 L8 8 L14 5 M8 8 V14" stroke="#bdd0ea" /></Icon>
                    </SmallButton>
                    <TagButton>Add Time Tag</TagButton>
                </StatusRow>
            </Coordinates>
            <Playback>
                <StatusRow>
                    {playIcons.map(([name, shape]) => (
                        <SmallButton key={name} aria-label={name} $flyout={name === "Play"}>
                            <Icon size={10}>{shape}</Icon>
                        </SmallButton>
                    ))}
                </StatusRow>
                <StatusRow $gap="3px">
                    <SmallButton aria-label="Key mode">
                        <Icon size={9}><path d="M7 3 V13 L1 8 Z M9 3 V13 L15 8 Z" fill={light} /></Icon>
                    </SmallButton>
                    <FrameField>
                        <FrameInput type="number" aria-label="Current frame" defaultValue="0" />
                    </FrameField>
                    <SmallButton aria-label="Time configuration" $width="12px">
                        <Icon size={10}>
                            <circle cx="6" cy="6" r="5" fill={light} />
                            <path d="M6 3 V6 H9" stroke="#444" strokeWidth="1.300" />
                            <circle cx="11.500" cy="11.500" r="3" stroke={gold} strokeWidth="2" />
                        </Icon>
                    </SmallButton>
                </StatusRow>
            </Playback>
            <KeyPanel>
                <KeyButton $big aria-label="Set keys">
                    <Icon size={20}>
                        <path d="M7 1 V12 M1.500 6.500 H12.500" stroke="#e6e6e6" strokeWidth="2.200" />
                        <path d="M9 13.500 L14 8.500 M12 10.500 L13.500 12" stroke={teal} strokeWidth="1.300" />
                        <circle cx="8.700" cy="13.300" r="1.300" stroke={teal} />
                    </Icon>
                </KeyButton>
                <KeyStack>
                    <KeyButton>Auto Key</KeyButton>
                    <KeyButton>Set Key</KeyButton>
                </KeyStack>
                <KeyStack>
                    <Select label="Key selection" value="Selected" />
                    <KeyFilterRow>
                        <SmallButton aria-label="Tangents" $flyout $width="14px">
                            <Icon size={11}>
                                <path d="M2 15 Q5 12 6 4 M14 15 Q11 12 10 4" stroke={teal} strokeWidth="1.500" />
                                <path d="M1 3 H15" stroke={light} />
                                <path d="M6 1.500 H10 V5 H6 Z" fill={light} />
                            </Icon>
                        </SmallButton>
                        <KeyButton $width="56px">Key Filters...</KeyButton>
                    </KeyFilterRow>
                </KeyStack>
            </KeyPanel>
            <NavGrid>
                {navIcons.map(([name, shape, flyout]) => (
                    <SmallButton key={name} aria-label={name} $width="14px" $flyout={flyout}>
                        <Icon size={10}>{shape}</Icon>
                    </SmallButton>
                ))}
            </NavGrid>
        </StatusBar>
    );
}

/* ---------- app ---------- */

// the letter after "_" is the menu's shortcut
const menus = [
    "_File", "_Edit", "_Tools", "_Group", "_Views", "_Create", "_Modifiers", "_Animation", "Graph E_ditors",
    "_Rendering", "Civil View", "C_ustomize", "_Scripting", "Content", "Arnold", "_Help",
];

function MenuText({ text }) {
    const at = text.indexOf("_");
    if (at < 0) return text;
    return (
        <>
            {text.slice(0, at)}
            <u>{text[at + 1]}</u>
            {text.slice(at + 2)}
        </>
    );
}

export default function App() {
    return (
        <Page>
            <GlobalStyle />
            <TitleBar>
                <svg width="9" height="12" viewBox="0 0 9 12" aria-hidden="true">
                    <path d="M0 1 L7 0 V12 L0 11 Z" fill="#b5dfdd" />
                    <path d="M2 3 Q6 1.500 6 4 Q6 5.500 3.500 6 Q7 6.500 6 8.500 Q5 10.500 1.500 9.500" stroke="#167f86" strokeWidth="1.800" fill="none" />
                </svg>
                <Title>Untitled - Autodesk 3ds Max 2018</Title>
                <WindowButtons>
                    <WindowButton aria-label="Minimize">
                        <svg width="10" height="10" viewBox="0 0 10 10"><path d="M2 5.500 H8" stroke="currentColor" /></svg>
                    </WindowButton>
                    <WindowButton aria-label="Restore">
                        <svg width="10" height="10" viewBox="0 0 10 10" fill="none"><path d="M2.500 3.500 H6.500 V7.500 H2.500 Z M3.500 3 V1.500 H8.500 V6.500 H7" stroke="currentColor" /></svg>
                    </WindowButton>
                    <WindowButton aria-label="Close">
                        <svg width="10" height="10" viewBox="0 0 10 10"><path d="M2 2 L8 8 M8 2 L2 8" stroke="currentColor" /></svg>
                    </WindowButton>
                </WindowButtons>
            </TitleBar>
            <MenuBar>
                <MenuList>
                    {menus.map((text) => (
                        <MenuItem key={text}><MenuText text={text} /></MenuItem>
                    ))}
                </MenuList>
                <SignIn>
                    <Icon size={11}>
                        <circle cx="8" cy="6" r="4.500" stroke="#444" strokeWidth="1.300" />
                        <path d="M6 10 Q2 11 2 14.500 H14 Q14 11 10 10" stroke="#444" strokeWidth="1.300" />
                    </Icon>
                    <SignInLabel>Sign In</SignInLabel>
                    <svg width="6" height="4" viewBox="0 0 6 4" aria-hidden="true"><path d="M0 0 H6 L3 4 Z" fill="#111" /></svg>
                </SignIn>
                <WorkspaceLabel htmlFor="workspace">Workspaces:</WorkspaceLabel>
                <Select id="workspace" value="Workspace_1" width="84px" />
            </MenuBar>
            <MainToolbar />
            <Body>
                <LeftToolbar />
                <Main>
                    <RibbonBar />
                    <Workspace>
                        <Viewport>
                            <Chandelier />
                            <ViewLabel>[+] [Front ] [Standard ] [Clay + Edged Faces ]</ViewLabel>
                            <Stats>
                                <tbody>
                                    <tr><th /><td>Total</td></tr>
                                    <tr><th>Polys:</th><td>591 424</td></tr>
                                    <tr><th>Verts:</th><td>306 691</td></tr>
                                    <tr><th /><td /></tr>
                                    <tr><th>FPS:</th><td>191,256</td></tr>
                                </tbody>
                            </Stats>
                        </Viewport>
                        <CreatePanel />
                    </Workspace>
                </Main>
            </Body>
            <Status />
        </Page>
    );
}
